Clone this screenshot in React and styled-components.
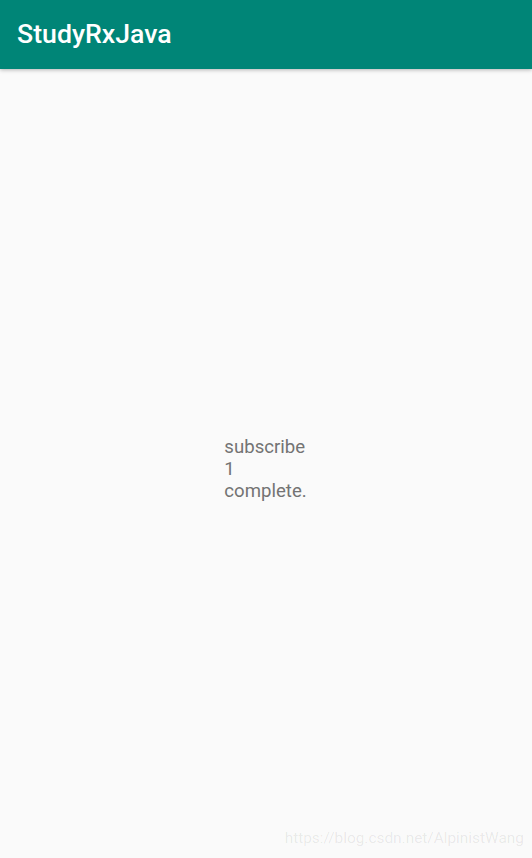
import React from 'react';
import styled, { createGlobalStyle } from 'styled-components';

const GlobalStyle = createGlobalStyle`
  html, body {
    margin: 0;
    padding: 0;
    background: #fafafa;
  }
  body {
    font-family: Roboto, "Liberation Sans", sans-serif;
  }
`;

const Screen = styled.div`
  position: relative;
  width: 532px;
  height: 858px;
  display: flex;
  flex-direction: column;
  background: #fafafa;
  overflow: hidden;
`;

const AppBar = styled.header`
  height: 69px;
  flex: 0 0 69px;
  display: flex;
  align-items: center;
  padding: 0 17px;
  background: #008577;
  box-shadow: 0 1px 4px rgba(0, 0, 0, 0.28);
  z-index: 1;
`;

const Title = styled.h1`
  margin: 0;
  margin-top: -1px;
  font-size: 26.7px;
  font-weight: 500;
  color: #ffffff;
  letter-spacing: 0;
`;

const Content = styled.main`
  flex: 1;
  display: flex;
  align-items: center;
  justify-content: center;
  padding-top: 11px;
`;

const Output = styled.div`
  display: flex;
  flex-direction: column;
  font-size: 18.6px;
  line-height: 22px;
  color: #737373;
  margin-left: -1px;
`;

const Watermark = styled.span`
  position: absolute;
  right: 8px;
  bottom: 11px;
  font-size: 15.4px;
  color: rgba(0, 0, 0, 0.08);
`;

const lines = ['subscribe', '1', 'complete.'];

export default function App() {
  return (
    <>
      <GlobalStyle />
      <Screen>
        <AppBar>
          <Title>StudyRxJava</Title>
        </AppBar>
        <Content>
          <Output>
            {lines.map((line) => (
              <span key={line}>{line}</span>
            ))}
          </Output>
        </Content>
        <Watermark>https://blog.csdn.net/AlpinistWang</Watermark>
      </Screen>
    </>
  );
}
